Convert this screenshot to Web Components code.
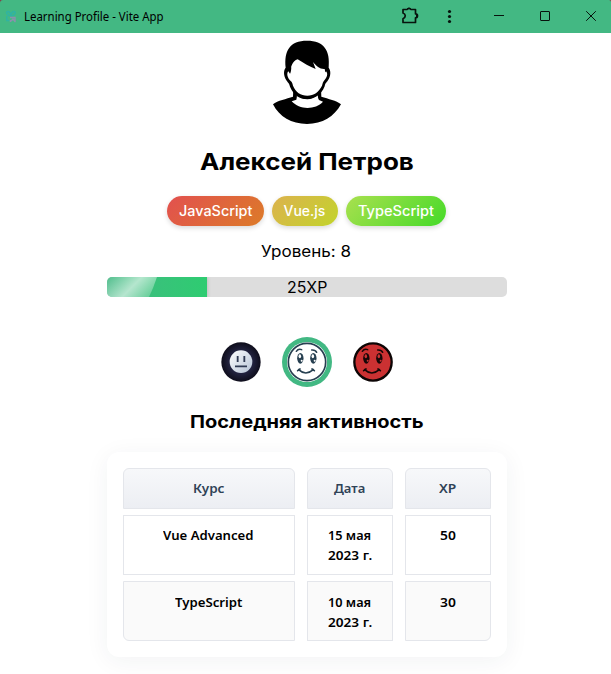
<!DOCTYPE html>
<html lang="ru">
<head>
<meta charset="utf-8">
<title>Learning Profile</title>
<style>
html,body{margin:0;height:100%;background:#fff;overflow:hidden}
body{font-family:Inter,"Noto Sans",sans-serif;color:#000}
</style>
</head>
<body>
<profile-app></profile-app>
<script>
const define=(name,html,ready)=>customElements.define(name,class extends HTMLElement{
  connectedCallback(){
    if(this.shadowRoot)return;
    const t=document.createElement('template');
    t.innerHTML=typeof html==='function'?html(this):html;
    this.attachShadow({mode:'open'}).append(t.content.cloneNode(true));
    if(ready)ready(this);
  }
});

// One line of text, stretched horizontally to the width given in "w".
define('fit-text',el=>`<style>
:host{display:inline-block;width:${el.getAttribute('w')}px;white-space:nowrap;text-align:left}
span{display:inline-block;transform-origin:0 50%}
</style><span>${el.getAttribute('text')}</span>`,el=>{
  const s=el.shadowRoot.querySelector('span');
  s.style.transform=`scaleX(${el.getAttribute('w')/s.offsetWidth})`;
});

define('title-bar',`<style>
:host{display:block;height:33px;background:#853c47}
header{height:33px;background:#43b883;border-radius:3px 2px 0 0;display:flex;align-items:center;box-sizing:border-box;padding-left:5px;font:12px/16px "Noto Sans",sans-serif}
.logo{margin-right:7px}
.sp{flex:1}
svg{display:block}
</style>
<header>
<svg class="logo" width="12" height="14" viewBox="0 0 12 14" fill="none" stroke-width="1.4"><path d="M5.5 6C1 5 .5 1.5 3 1.5S5.5 4 6 6c.3-3 1-4.500 3-4.500S11 5 6.500 6" stroke="#2fb3a4"/><path d="M1.800 6v4.500h2.700" stroke="#2fb3a4"/><path d="M5 7.500h5v4.500M6 11l2-2 2.500 3M5.500 10v2" stroke="#8b91ad"/></svg>
<fit-text w="140" text="Learning Profile - Vite App"></fit-text>
<span class="sp"></span>
<svg width="221" height="33" viewBox="0 0 221 33" fill="none" stroke="#07130d">
<path d="M13 9.500h4.200a2 2 0 0 1 3.600 0H25.500v4.300a2 2 0 0 1 0 4V22.500H13v-3.700c3-1.200 3-4.700 0-5.800z" stroke-width="1.700" stroke-linejoin="round"/><path d="M17.200 9a1.900 1.900 0 0 1 3.600 0zM26 14a1.900 1.900 0 0 1 0 3.600z" fill="#07130d" stroke="none"/>
<g fill="#07130d" stroke="none"><circle cx="59.500" cy="11.500" r="1.600"/><circle cx="59.500" cy="16.500" r="1.600"/><circle cx="59.500" cy="21.500" r="1.600"/></g>
<path d="M104 15.500h10"/><rect x="150.500" y="11.500" width="9" height="9" rx=".5"/><path d="M196.200 11.200l9.600 9.600M205.800 11.200l-9.600 9.600"/>
</svg>
</header>`);

define('user-avatar',`<style>:host{display:block;width:90px;height:96px}svg{display:block}</style>
<svg width="90" height="96" viewBox="0 0 270 288">
<path d="M33 211C47 199 73 195 93 188L94 164H177L178 188C199 195 223 199 237 211C216 248 182 270 135 270S52 248 33 211Z"/>
<path d="M89 202L103 197C105 190 105 187 104 181C124 201 148 201 168 181C167 189 168 194 171 198L183 203C160 228 112 228 89 202Z" fill="#fff"/>
<path d="M71 101C66 50 83 20 135 20S205 50 200 101C207 110 207 125 198 139C193 147 190 147 188 157C177 184 157 195 135 195S95 184 84 158C81 147 79 147 74 140C63 123 65 108 71 101Z"/>
<path d="M84 119C86 100 91 80 107 76C125 88 143 98 161 105L153 84C164 96 173 106 188 105C190 112 189 118 192 112C199 119 195 132 186 140C183 143 182 148 180 155C170 174 156 185 136 185S101 174 93 155C91 148 90 144 86 141C76 132 73 118 79 112Z" fill="#fff"/>
<path d="M82 100h6l-2 20z"/>
</svg>`);

define('skill-tag',el=>`<style>
:host{display:block}
div{height:30px;box-sizing:border-box;padding:0 12px;border-radius:15px;background:linear-gradient(135deg,${el.getAttribute('from')},${el.getAttribute('to')});box-shadow:0 2px 5px rgba(0,0,0,.15);color:#fff;font-size:14px;font-weight:500;line-height:30px}
fit-text{display:block}
</style><div><fit-text w="${el.getAttribute('w')}" text="${el.getAttribute('label')}"></fit-text></div>`);

define('xp-bar',`<style>
:host{display:grid;width:400px;height:20px;background:#ddd;border-radius:5px;overflow:hidden;font-size:15.500px;line-height:20px}
.fill,.label{grid-area:1/1}
.fill{width:100px;background:linear-gradient(90deg,#42b883,#2ecc71);overflow:hidden;box-shadow:0 0 4px rgba(0,0,0,.2)}
.shine{width:50px;height:20px;background:linear-gradient(135deg,rgba(255,255,255,.08),rgba(255,255,255,.62) 50%,rgba(255,255,255,.12));clip-path:polygon(0 0,100% 0,92% 55%,84% 100%,0 100%)}
.label{text-align:center;z-index:1;padding:1px 1px 0 0}
</style><div class="fill"><div class="shine"></div></div><div class="label"><fit-text w="40" text="25XP"></fit-text></div>`);

const smile=(ink,x)=>`<g transform="translate(${x} 0)" fill="none" stroke="${ink}" stroke-linecap="round">
<path d="M46 64q6-9 16-5M92 60q11-1 15 7" stroke-width="4.500"/>
<path d="M53 119q21 20 44 0M50 122l7-5M93 117l7 5" stroke-width="5"/>
<ellipse cx="58" cy="85" rx="9.500" ry="16" fill="${ink}" stroke="none"/><ellipse cx="97" cy="85" rx="9.500" ry="16" fill="${ink}" stroke="none"/>
<g fill="#fff" stroke="none"><ellipse cx="56.500" cy="79" rx="3.800" ry="6"/><ellipse cx="95.500" cy="79" rx="3.800" ry="6"/><circle cx="62" cy="92" r="3"/><circle cx="101" cy="92" r="3"/></g></g>`;
const faces={
 calm:`<svg width="40" height="40" viewBox="33 36 120 120"><defs><radialGradient id="n"><stop offset=".5" stop-color="#262747"/><stop offset="1" stop-color="#0e0d1b"/></radialGradient><linearGradient id="f" x2="1" y2="1"><stop stop-color="#fff"/><stop offset="1" stop-color="#b5c2d5"/></linearGradient></defs><circle cx="93" cy="96" r="59" fill="url(#n)"/><circle cx="93" cy="95" r="34" fill="url(#f)"/><path d="M83 78v18M103 78v18M75 109h36" stroke="#303a53" stroke-width="5.500"/></svg>`,
 happy:`<svg width="50" height="50" viewBox="216 21 150 150"><circle cx="291" cy="96" r="75" fill="#42b883"/><circle cx="291" cy="96" r="60" fill="#fff"/><circle cx="291" cy="96" r="56" fill="#fff" stroke="#263f50" stroke-width="5"/>${smile('#263f50',213)}</svg>`,
 angry:`<svg width="40" height="40" viewBox="429 36 120 120"><circle cx="489" cy="96" r="56" fill="#cb3132" stroke="#0c0505" stroke-width="7"/>${smile('#160707',411).replaceAll('#fff','#cb3132')}</svg>`};
define('mood-face',el=>`<style>:host{display:block}svg{display:block}</style>${faces[el.getAttribute('kind')]}`);

define('activity-cell',el=>`<style>
:host{display:block;box-sizing:border-box;border:1px solid #e4e6eb;padding:10px 1px 0 0;height:60px;text-align:center;font:600 13px/19.500px "Noto Sans",sans-serif;background:#fff;border-radius:var(--r,0)}
:host([head]){height:41px;color:#2f4256;background:linear-gradient(#f7f8fa,#eceef3);border-radius:6px 6px 0 0}
:host([alt]){background:#fafafa}
</style><slot></slot>`);

define('activity-table',`<style>
:host{display:grid;box-sizing:border-box;width:400px;height:205px;padding:16px;grid-template-columns:172px 86px 86px;grid-template-rows:41px 60px 60px;gap:6px 12px;background:#fff;border-radius:12px;box-shadow:0 4px 24px rgba(30,50,70,.06)}
fit-text{display:block;margin:0 auto}
</style>
<activity-cell head><fit-text w="31" text="Курс"></fit-text></activity-cell>
<activity-cell head><fit-text w="31" text="Дата"></fit-text></activity-cell>
<activity-cell head><fit-text w="17" text="XP"></fit-text></activity-cell>
<activity-cell><fit-text w="91" text="Vue Advanced"></fit-text></activity-cell>
<activity-cell><fit-text w="43" text="15 мая"></fit-text><fit-text w="44" text="2023 г."></fit-text></activity-cell>
<activity-cell><fit-text w="16" text="50"></fit-text></activity-cell>
<activity-cell alt style="--r:0 0 0 6px;padding-top:11px"><fit-text w="67" text="TypeScript"></fit-text></activity-cell>
<activity-cell alt style="padding-top:11px"><fit-text w="43" text="10 мая"></fit-text><fit-text w="44" text="2023 г."></fit-text></activity-cell>
<activity-cell alt style="--r:0 0 6px 0;padding-top:11px"><fit-text w="16" text="30"></fit-text></activity-cell>`);

define('profile-app',`<style>
:host{display:block}
main{display:flex;flex-direction:column;align-items:center;width:614px;margin-top:1px}
h1,h3,p{margin:0;text-align:center;display:flex}
h1{font-size:23.200px;line-height:30px;font-weight:700;margin-top:17px}
.tags{display:flex;gap:8px;margin-top:19px;padding-right:2px}
p{font-size:15.500px;line-height:20px;margin-top:16px;padding-right:2px}
xp-bar{margin-top:15px}
.moods{display:flex;gap:21px;align-items:center;margin-top:40px;height:50px}
h3{font-size:18px;line-height:24px;font-weight:700;margin-top:23px}
activity-table{margin-top:18px}
</style>
<title-bar></title-bar>
<main>
<user-avatar></user-avatar>
<h1><fit-text w="214" text="Алексей Петров"></fit-text></h1>
<div class="tags">
<skill-tag label="JavaScript" w="73" from="#e2504f" to="#dc7b28"></skill-tag>
<skill-tag label="Vue.js" w="42" from="#dcb24e" to="#c2d42b"></skill-tag>
<skill-tag label="TypeScript" w="76" from="#a9e04f" to="#45da28"></skill-tag>
</div>
<p><fit-text w="90" text="Уровень: 8"></fit-text></p>
<xp-bar></xp-bar>
<div class="moods"><mood-face kind="calm"></mood-face><mood-face kind="happy"></mood-face><mood-face kind="angry"></mood-face></div>
<h3><fit-text w="234" text="Последняя активность"></fit-text></h3>
<activity-table></activity-table>
</main>`);
</script>
</body>
</html>
